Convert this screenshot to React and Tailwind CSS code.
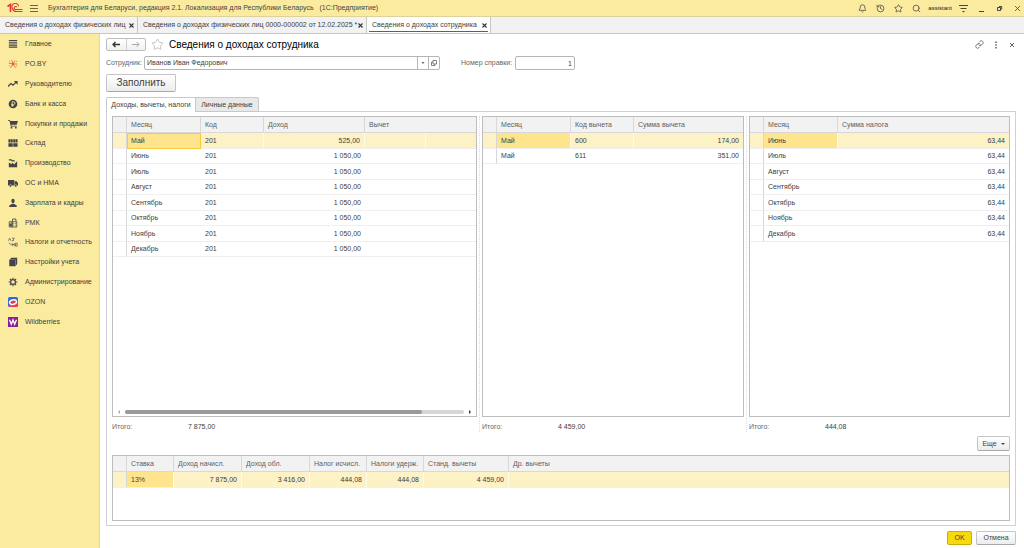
import { Bell, History, Link, Search, Star } from 'lucide-react';

const windowTabs = [
  { label: 'Сведения о доходах физических лиц', width: 'w-[138px]' },
  { label: 'Сведения о доходах физических лиц 0000-000002 от 12.02.2025 *', width: 'w-[229px]' },
  { label: 'Сведения о доходах сотрудника', width: 'w-[124px]', active: true },
];

const sections = [
  {
    label: 'Главное',
    icon: <path d="M1 2h10M1 4.6h10M1 7.2h10M1 9.8h10" stroke="currentColor" strokeWidth="1.5" />,
  },
  {
    label: 'PO.BY',
    icon: (
      <g stroke="#e2573b" strokeWidth="1" fill="none">
        <path d="M6 6L4.5 1.5M6 6l2.5-4M6 6h5M6 6l3 4.500M6 6l-3 4.500M6 6L1 5" />
        <path d="M1.500 2.500h1M10 3h1M1 8h1M10 8.500h1" />
        <circle cx="6" cy="6" r="1" fill="#e2573b" />
      </g>
    ),
  },
  {
    label: 'Руководителю',
    icon: (
      <>
        <path d="M0 9l3.5-3.500L6 7.300 9.500 4" stroke="currentColor" strokeWidth="1.5" fill="none" />
        <path d="M7 2.500h4.500V7z" />
      </>
    ),
  },
  {
    label: 'Банк и касса',
    icon: (
      <>
        <circle cx="6" cy="6" r="5.2" />
        <path d="M5 9.3V3.3h1.8a1.6 1.6 0 010 3.2H4M4 8h3" stroke="#fbeb9e" fill="none" />
      </>
    ),
  },
  {
    label: 'Покупки и продажи',
    icon: (
      <>
        <path d="M0 1.200h2.400l.5 1.300H12L10.400 7H4l.2 1h6.300v1H3.300L1.800 2.200H0z" />
        <circle cx="4.2" cy="10.4" r="1.1" />
        <circle cx="9.4" cy="10.4" r="1.1" />
      </>
    ),
  },
  {
    label: 'Склад',
    icon: (
      <path d="M.5 1.500h2.400V5.500H.5zM3.300 1.500h2.400V5.500H3.300zM6.300 1.500h2.400V5.500H6.300zM9.100 1.500h2.400V5.500H9.100zM.5 6.300h5.200v4.200H.5zM6.300 6.300h5.200v4.200H6.300z" />
    ),
  },
  {
    label: 'Производство',
    icon: <path d="M1 11V5.500L4.500 7.500V5.500l3 2L11 4v7zM1 1.500h3l1.500 1.300H8v1.400H5L3.500 3H1z" />,
  },
  {
    label: 'ОС и НМА',
    icon: (
      <>
        <path d="M0 2.500h7.500V9H0zM8 4h2.400L12 6.300V9H8z" />
        <circle cx="3" cy="9.4" r="1.5" stroke="#fbeb9e" strokeWidth=".6" />
        <circle cx="9.3" cy="9.4" r="1.5" stroke="#fbeb9e" strokeWidth=".6" />
      </>
    ),
  },
  {
    label: 'Зарплата и кадры',
    icon: (
      <>
        <ellipse cx="6" cy="3.6" rx="2" ry="2.6" />
        <path d="M1.500 10.800V9L5 7h2l3.500 2v1.800z" />
      </>
    ),
  },
  {
    label: 'РМК',
    icon: (
      <>
        <path d="M1.500 4.500H5v6.300H1.500zM5 4.500h5.500v6.300H5zM5.500 4.300V1.200h4v3" stroke="currentColor" fill="none" />
        <path d="M6.300 6h1v1h-1zM8.300 6h1v1h-1zM6.300 8h1v1h-1zM8.300 8h1v1h-1zM2 6.500h2.400V10H2z" />
      </>
    ),
  },
  {
    label: 'Налоги и отчетность',
    icon: (
      <path
        d="M.5 4.500L2 1.500l1.500 3M5 1.500h3M6.500 1.500v3M4.500 4.500h2M1 7l3 2.500M5 7.500V11M5 9h2.500M7.500 7.500V11M9 7.500h2V11H9z"
        stroke="currentColor"
        strokeWidth=".8"
        fill="none"
      />
    ),
  },
  {
    label: 'Настройки учета',
    icon: <path d="M1.500 3.500L4 1h7v7.500L8.800 11H1.500zM2.500 3.600h6V10h.4V3.200H3z" />,
  },
  {
    label: 'Администрирование',
    icon: (
      <>
        <circle cx="6" cy="6" r="2.9" stroke="currentColor" strokeWidth="1.4" fill="none" />
        <path
          d="M6 .8v2M6 9.200v2M.8 6h2M9.200 6h2M2.300 2.300l1.400 1.400M8.300 8.300l1.400 1.400M2.300 9.700l1.400-1.400M8.300 3.700l1.400-1.400"
          stroke="currentColor"
          strokeWidth="1.4"
        />
      </>
    ),
  },
  {
    label: 'OZON',
    icon: (
      <>
        <rect width="12" height="12" rx="2" fill="#1f6cf0" />
        <path d="M0 10L12 7v3a2 2 0 01-2 2H2a2 2 0 01-2-2z" fill="#ee3b55" />
        <ellipse cx="6" cy="6.2" rx="4.2" ry="2.6" fill="#e5394b" stroke="#fff" strokeWidth="1.8" transform="rotate(-12 6 6)" />
      </>
    ),
  },
  {
    label: 'Wildberries',
    icon: (
      <>
        <rect width="12" height="12" fill="#8b1f96" />
        <path d="M1.800 3.300l2.200 5.400 2-5.200 2 5.200 2.200-5.400" stroke="#fff" strokeWidth="1.6" fill="none" />
      </>
    ),
  },
];

const incomeColumns = [
  { title: 'Месяц', width: 'w-[74px]' },
  { title: 'Код', width: 'w-[63px]' },
  { title: 'Доход', width: 'w-[101px]', numeric: true },
  { title: 'Вычет', width: 'w-[61px]', open: true },
  { title: '' },
];

const incomeRows = [
  ['Май', '201', '525,00', '', ''],
  ['Июнь', '201', '1 050,00', '', ''],
  ['Июль', '201', '1 050,00', '', ''],
  ['Август', '201', '1 050,00', '', ''],
  ['Сентябрь', '201', '1 050,00', '', ''],
  ['Октябрь', '201', '1 050,00', '', ''],
  ['Ноябрь', '201', '1 050,00', '', ''],
  ['Декабрь', '201', '1 050,00', '', ''],
];

const deductionColumns = [
  { title: 'Месяц', width: 'w-[74px]' },
  { title: 'Код вычета', width: 'w-[63px]' },
  { title: 'Сумма вычета', numeric: true },
];

const deductionRows = [
  ['Май', '600', '174,00'],
  ['Май', '611', '351,00'],
];

const taxColumns = [
  { title: 'Месяц', width: 'w-[74px]' },
  { title: 'Сумма налога', numeric: true },
];

const taxRows = [
  ['Июнь', '63,44'],
  ['Июль', '63,44'],
  ['Август', '63,44'],
  ['Сентябрь', '63,44'],
  ['Октябрь', '63,44'],
  ['Ноябрь', '63,44'],
  ['Декабрь', '63,44'],
];

const summaryColumns = [
  { title: 'Ставка', width: 'w-[47px]' },
  { title: 'Доход начисл.', width: 'w-[68px]', numeric: true },
  { title: 'Доход обл.', width: 'w-[68px]', numeric: true },
  { title: 'Налог исчисл.', width: 'w-[57px]', numeric: true },
  { title: 'Налоги удерж.', width: 'w-[57px]', numeric: true },
  { title: 'Станд. вычеты', width: 'w-[85px]', numeric: true },
  { title: 'Др. вычеты', numeric: true },
];

const summaryRows = [['13%', '7 875,00', '3 416,00', '444,08', '444,08', '4 459,00', '']];

const buttonClass =
  'flex items-center justify-center rounded-[2px] border border-[#c4c4c4] border-b-[#a8a8a8] bg-linear-to-b from-white to-[#ececec]';

function DataTable({ label, columns, rows, focused }) {
  return (
    <table aria-label={label} className="w-full table-fixed border-separate border-spacing-0">
      <colgroup>
        <col className="w-[14px]" />
        {columns.map((col, i) => (
          <col key={i} className={col.width} />
        ))}
      </colgroup>
      <thead>
        <tr className="h-4 bg-[#f2f2f2] text-[#606060]">
          <th className="border-r border-b border-[#d8d8d8] p-0" />
          {columns.map((col, i) => (
            <th
              key={i}
              className={`truncate border-b border-[#d8d8d8] p-0 pl-1 text-left font-normal ${
                col.open || i === columns.length - 1 ? '' : 'border-r'
              }`}
            >
              {col.title}
            </th>
          ))}
        </tr>
      </thead>
      <tbody>
        {rows.map((row, r) => (
          <tr key={r} className={`odd:h-4 even:h-[15px] ${r === 0 ? 'bg-[#fdf1c6]' : ''}`}>
            <td className="border-r border-b border-r-[#d8d8d8] border-b-[#efefef] p-0" />
            {row.map((value, c) => (
              <td
                key={c}
                className={`border-b border-[#efefef] px-1 py-0 whitespace-nowrap ${columns[c].numeric ? 'text-right' : ''} ${
                  r === 0 && c < row.length - 1 ? 'border-r border-r-[#fff9e6]' : ''
                } ${r === 0 && c === 0 ? 'bg-[#fee48d]' : ''} ${
                  focused && r === 0 && c === 0 ? 'outline-1 -outline-offset-1 outline-[#f5cb3c]' : ''
                }`}
              >
                {value}
              </td>
            ))}
          </tr>
        ))}
      </tbody>
    </table>
  );
}

function Pane({ total, children }) {
  return (
    <div className="flex min-w-0 flex-col">
      <div className="flex flex-1 flex-col border border-[#bdbdbd]">{children}</div>
      <div className="flex h-[19px] items-center">
        <span className="w-[76px] text-[#666]">Итого:</span>
        <span>{total}</span>
      </div>
    </div>
  );
}

function Splitter() {
  return <div className="mx-auto mb-1 w-px border-l border-dotted border-[#dcdcdc]" />;
}

function TitleBar() {
  return (
    <header className="flex h-[17px] items-center border-b border-[#ddd29a] bg-[#fbeb9e] pl-[7px] text-[#444]">
      <svg width="16" height="10" viewBox="0 0 16 10" fill="none" stroke="#dc3a30" aria-label="1С">
        <path d="M.5 3.500L3.500 1.500V9" strokeWidth="1.600" />
        <path d="M11.500 3.500A3.300 3.300 0 105.500 5.500C6 7.500 7.500 8.500 9.300 8.500H15.500" strokeWidth="1.100" />
        <path d="M9.800 4A1.500 1.500 0 109 6.500H15.500" strokeWidth="1.100" />
      </svg>
      <button aria-label="Меню" className="ml-[7px] flex">
        <svg width="8" height="8" viewBox="0 0 8 8" stroke="#6b664a" strokeWidth="1">
          <path d="M0 1.500h8M0 4.500h8M0 7.500h8" />
        </svg>
      </button>
      <span className="ml-[10px] whitespace-pre">
        Бухгалтерия для Беларуси, редакция 2.1. Локализация для Республики Беларусь   (1С:Предприятие)
      </span>
      <div className="ml-auto flex items-center gap-[9px] pr-[2px]">
        <button aria-label="Уведомления"><Bell size={9} /></button>
        <button aria-label="История"><History size={9} /></button>
        <button aria-label="Избранное"><Star size={9} /></button>
        <button aria-label="Поиск"><Search size={9} /></button>
        <span className="-mx-0.5 text-[6px] text-[#222]">assistant</span>
        <button aria-label="Настройки">
          <svg width="9" height="9" viewBox="0 0 9 9" stroke="currentColor" strokeWidth="1">
            <path d="M0 1.500h9M1.500 4.500h6" />
            <path d="M3 7h3L4.500 8.500z" fill="currentColor" stroke="none" />
          </svg>
        </button>
        <button aria-label="Свернуть">
          <svg width="9" height="9" viewBox="0 0 9 9" stroke="currentColor"><path d="M2 7.500h5" /></svg>
        </button>
        <button aria-label="Развернуть">
          <svg width="9" height="9" viewBox="0 0 9 9" stroke="currentColor" fill="none">
            <path d="M2.500 3.500h3v3h-3zM4 2.500h2.700v3" />
          </svg>
        </button>
        <button aria-label="Закрыть">
          <svg width="9" height="9" viewBox="0 0 9 9" stroke="currentColor" strokeWidth=".8"><path d="M2 2l5 5M7 2L2 7" /></svg>
        </button>
      </div>
    </header>
  );
}

function WindowTabs() {
  return (
    <nav className="flex h-[17px] border-b border-[#c6c6c6] bg-[#f2f2f2]">
      {windowTabs.map(({ label, width, active }) => (
        <div
          key={label}
          className={`relative flex items-center justify-between border-r border-[#c6c6c6] pr-[3px] pl-[5px] ${width} ${active ? 'bg-white' : ''}`}
        >
          <a href="#" className="whitespace-nowrap">{label}</a>
          <button aria-label="Закрыть вкладку">
            <svg width="5" height="5" viewBox="0 0 5 5" stroke="#333" strokeWidth="1.1">
              <path d="M.5 .5l4 4M4.500 .5l-4 4" />
            </svg>
          </button>
          {active && <span className="absolute inset-x-[2px] bottom-px h-px bg-[#009646]" />}
        </div>
      ))}
    </nav>
  );
}

function Sidebar() {
  return (
    <aside className="w-[100px] shrink-0 border-r border-[#ddd6b0] bg-[#fbeb9e]">
      <ul>
        {sections.map(({ label, icon }) => (
          <li key={label} className="h-5 nth-[5n]:h-[19px]">
            <a href="#" className="flex h-full items-center gap-[7px] pl-2">
              <svg width="10" height="10" viewBox="0 0 12 12" fill="currentColor" className="text-[#45434a]">
                {icon}
              </svg>
              <span className="whitespace-nowrap">{label}</span>
            </a>
          </li>
        ))}
      </ul>
    </aside>
  );
}

function FormHeader() {
  return (
    <div className="flex h-[21px] items-center">
      <div className="flex h-[13px] w-10 rounded-[2px] border border-[#bdbdbd] bg-linear-to-b from-white to-[#f0f0f0]">
        <button aria-label="Назад" className="flex flex-1 items-center justify-center border-r border-[#d0d0d0] text-[#333]">
          <svg width="8" height="7" viewBox="0 0 8 7" stroke="currentColor" strokeWidth="1.3" fill="none">
            <path d="M8 3.500H1M3.500 1L1 3.500 3.500 6" />
          </svg>
        </button>
        <button aria-label="Вперед" className="flex flex-1 items-center justify-center text-[#aaa]">
          <svg width="8" height="7" viewBox="0 0 8 7" stroke="currentColor" fill="none">
            <path d="M0 3.500h7M4.500 1L7 3.500 4.500 6" />
          </svg>
        </button>
      </div>
      <button aria-label="В избранное" className="ml-[5px] text-[#b8b8b8]">
        <Star size={13} strokeWidth={1.5} />
      </button>
      <h1 className="ml-[5px] text-[10px] text-black">Сведения о доходах сотрудника</h1>
      <div className="ml-auto flex items-center gap-2 text-[#555]">
        <button aria-label="Ссылка"><Link size={9} /></button>
        <button aria-label="Еще действия">
          <svg width="8" height="8" viewBox="0 0 8 8" fill="currentColor">
            <path d="M3.300 .5h1.400v1.400H3.300zM3.300 3.300h1.400v1.400H3.300zM3.300 6.100h1.400v1.400H3.300z" />
          </svg>
        </button>
        <button aria-label="Закрыть">
          <svg width="8" height="8" viewBox="0 0 8 8" stroke="currentColor" strokeWidth=".9"><path d="M2 2l4 4M6 2L2 6" /></svg>
        </button>
      </div>
    </div>
  );
}

export default function App() {
  return (
    <div className="flex min-h-screen flex-col bg-white font-['Liberation_Sans',Arial,sans-serif] text-[7px] leading-[10px] text-[#404040]">
      <TitleBar />
      <WindowTabs />
      <div className="flex flex-1">
        <Sidebar />
        <main className="flex min-w-0 flex-1 flex-col pr-2 pb-[3px] pl-[6px]">
          <FormHeader />

          {/* Employee and certificate number */}
          <div className="mt-px flex h-[14px] items-center">
            <label htmlFor="employee" className="w-[38px] text-[#666]">Сотрудник:</label>
            <div className="flex h-full w-[296px] rounded-[2px] border border-[#b5b5b5]">
              <input id="employee" defaultValue="Иванов Иван Федорович" className="min-w-0 flex-1 px-[2px] outline-none" />
              <button aria-label="Выбрать" className="flex w-[11px] items-center justify-center border-l border-[#b5b5b5]">
                <svg width="4" height="2" viewBox="0 0 4 2" fill="#666"><path d="M.5 0h3L2 2z" /></svg>
              </button>
              <button aria-label="Открыть" className="flex w-[11px] items-center justify-center border-l border-[#b5b5b5]">
                <svg width="6" height="6" viewBox="0 0 6 6" stroke="#555" strokeWidth=".7" fill="none">
                  <path d="M2 .5h3.500V4H2zM2 2H.5v3.500H4V4" />
                </svg>
              </button>
            </div>
            <label htmlFor="number" className="ml-[21px] w-[54px] text-[#666]">Номер справки:</label>
            <input id="number" defaultValue="1" className="h-full w-[60px] rounded-[2px] border border-[#b5b5b5] px-[2px] text-right outline-none" />
          </div>

          <button className={`mt-1 h-[18px] w-[70px] text-[10px] ${buttonClass}`}>Заполнить</button>

          {/* Page tabs */}
          <div role="tablist" className="z-10 mt-[5px] -mb-px flex h-[15px]">
            <button role="tab" aria-selected="true" className="w-[90px] rounded-tl-[2px] border border-b-0 border-[#c8c8c8] bg-white">
              Доходы, вычеты, налоги
            </button>
            <button role="tab" aria-selected="false" className="w-[63px] rounded-tr-[2px] border border-l-0 border-[#c8c8c8] bg-[#e9e9e9]">
              Личные данные
            </button>
          </div>

          <section className="flex flex-1 flex-col border border-[#d0d0d0] px-[5px] pt-1 pb-1">
            <div className="grid flex-1 grid-cols-[365fr_5px_262fr_5px_261fr]">
              <Pane total="7 875,00">
                <DataTable label="Доходы" columns={incomeColumns} rows={incomeRows} focused />
                <div className="mt-auto flex h-2 items-center gap-1 px-1">
                  <svg width="4" height="4" viewBox="0 0 4 4" fill="#aaa"><path d="M3 0v4L1 2z" /></svg>
                  <div className="h-1 flex-1 rounded-full bg-[#d6d6d6]">
                    <div className="h-1 w-7/8 rounded-full bg-[#999]" />
                  </div>
                  <svg width="4" height="4" viewBox="0 0 4 4" fill="#333"><path d="M1 0v4L3 2z" /></svg>
                </div>
              </Pane>
              <Splitter />
              <Pane total="4 459,00">
                <DataTable label="Вычеты" columns={deductionColumns} rows={deductionRows} />
              </Pane>
              <Splitter />
              <Pane total="444,08">
                <DataTable label="Налоги" columns={taxColumns} rows={taxRows} />
              </Pane>
            </div>

            <div className="flex justify-end pb-1">
              <button className={`h-[15px] w-[33px] gap-1 ${buttonClass}`}>
                Еще
                <svg width="4" height="2" viewBox="0 0 4 2" fill="#444"><path d="M0 0h4L2 2z" /></svg>
              </button>
            </div>

            <div className="min-h-[66px] border border-[#bdbdbd]">
              <DataTable label="Итоги по ставкам" columns={summaryColumns} rows={summaryRows} />
            </div>
          </section>

          <div className="mt-[5px] flex justify-end gap-1">
            <button className="h-[14px] w-[25px] rounded-[2px] border border-[#c9ae10] bg-[#f8da0c]">OK</button>
            <button className={`h-[14px] w-10 ${buttonClass}`}>Отмена</button>
          </div>
        </main>
      </div>
    </div>
  );
}
